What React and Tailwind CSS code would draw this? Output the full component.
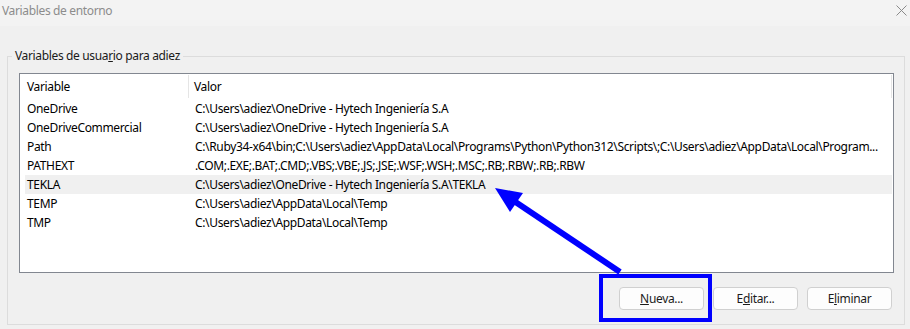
import React from 'react';

const rows = [
  ['OneDrive', 'C:\\Users\\adiez\\OneDrive - Hytech Ingeniería S.A'],
  ['OneDriveCommercial', 'C:\\Users\\adiez\\OneDrive - Hytech Ingeniería S.A'],
  ['Path', 'C:\\Ruby34-x64\\bin;C:\\Users\\adiez\\AppData\\Local\\Programs\\Python\\Python312\\Scripts\\;C:\\Users\\adiez\\AppData\\Local\\Program...'],
  ['PATHEXT', '.COM;.EXE;.BAT;.CMD;.VBS;.VBE;.JS;.JSE;.WSF;.WSH;.MSC;.RB;.RBW;.RB;.RBW'],
  ['TEKLA', 'C:\\Users\\adiez\\OneDrive - Hytech Ingeniería S.A\\TEKLA', true],
  ['TEMP', 'C:\\Users\\adiez\\AppData\\Local\\Temp'],
  ['TMP', 'C:\\Users\\adiez\\AppData\\Local\\Temp'],
];

function WinButton({ children }) {
  return (
    <button className="w-[85px] h-[23px] rounded-[4px] border border-[#d0d0d0] bg-[#fdfdfd] text-[12px] text-[#1b1b1b] flex items-center justify-center">
      {children}
    </button>
  );
}

export default function App() {
  return (
    <div className="relative w-[910px] h-[329px] overflow-hidden bg-[#f0f0f0] text-[12px] tracking-[-0.35px] text-black font-['Noto_Sans',sans-serif]">
      {/* title bar */}
      <div className="h-[26px] bg-[#f3f3f3] flex items-center justify-between pl-[2px] pr-[3px]">
        <span className="text-[#8c8c8c] leading-none -mt-[5px]">Variables de entorno</span>
        <svg width="11" height="11" viewBox="0 0 11 11" className="-mt-[6px]">
          <path d="M0.5 0.5 L10.5 10.5 M10.5 0.5 L0.5 10.5" stroke="#8a8a8a" strokeWidth="1" fill="none" />
        </svg>
      </div>

      <fieldset className="mt-[22px] ml-[7px] w-[898px] h-[277px] border border-[#dcdcdc]">
        <legend className="ml-[4px] px-[3px] leading-[16px] text-[#1a1a1a]">
          Variables de usua<span className="underline">r</span>io para adiez
        </legend>

        {/* list view */}
        <div className="mt-[9px] ml-[11px] w-[875px] h-[200px] border border-[#828790] bg-white">
          <div className="h-[25px] flex items-center w-[872px]">
            <div className="w-[168px] pl-[7px] leading-none">Variable</div>
            <div className="w-px h-[23px] bg-[#e5e5e5]" />
            <div className="flex-1 pl-[5px] leading-none">Valor</div>
            <div className="w-px h-[23px] bg-[#e5e5e5]" />
          </div>
          <div className="pl-[5px] w-[872px]">
            {rows.map(([name, value, selected]) => (
              <div
                key={name}
                className={`h-[19px] flex items-center whitespace-nowrap ${selected ? 'bg-[#f0f0f0]' : ''}`}
              >
                <div className="w-[164px] pl-[2px]">{name}</div>
                <div className="flex-1 min-w-0 pl-[6px] overflow-hidden">{value}</div>
              </div>
            ))}
          </div>
        </div>

        {/* buttons */}
        <div className="mt-[14px] pr-[12px] flex justify-end gap-[9px]">
          <WinButton><span className="underline">N</span>ueva...</WinButton>
          <WinButton>E<span className="underline">d</span>itar...</WinButton>
          <WinButton>E<span className="underline">l</span>iminar</WinButton>
        </div>
      </fieldset>

      {/* annotation overlay */}
      <svg className="absolute inset-0 pointer-events-none" width="910" height="329">
        <rect x="601" y="276" width="109" height="44" fill="none" stroke="#0000ff" strokeWidth="4" />
        <line x1="620" y1="272" x2="514" y2="201" stroke="#0000ff" strokeWidth="6" />
        <polygon points="495,188 523,193 510,212" fill="#0000ff" />
      </svg>
    </div>
  );
}
